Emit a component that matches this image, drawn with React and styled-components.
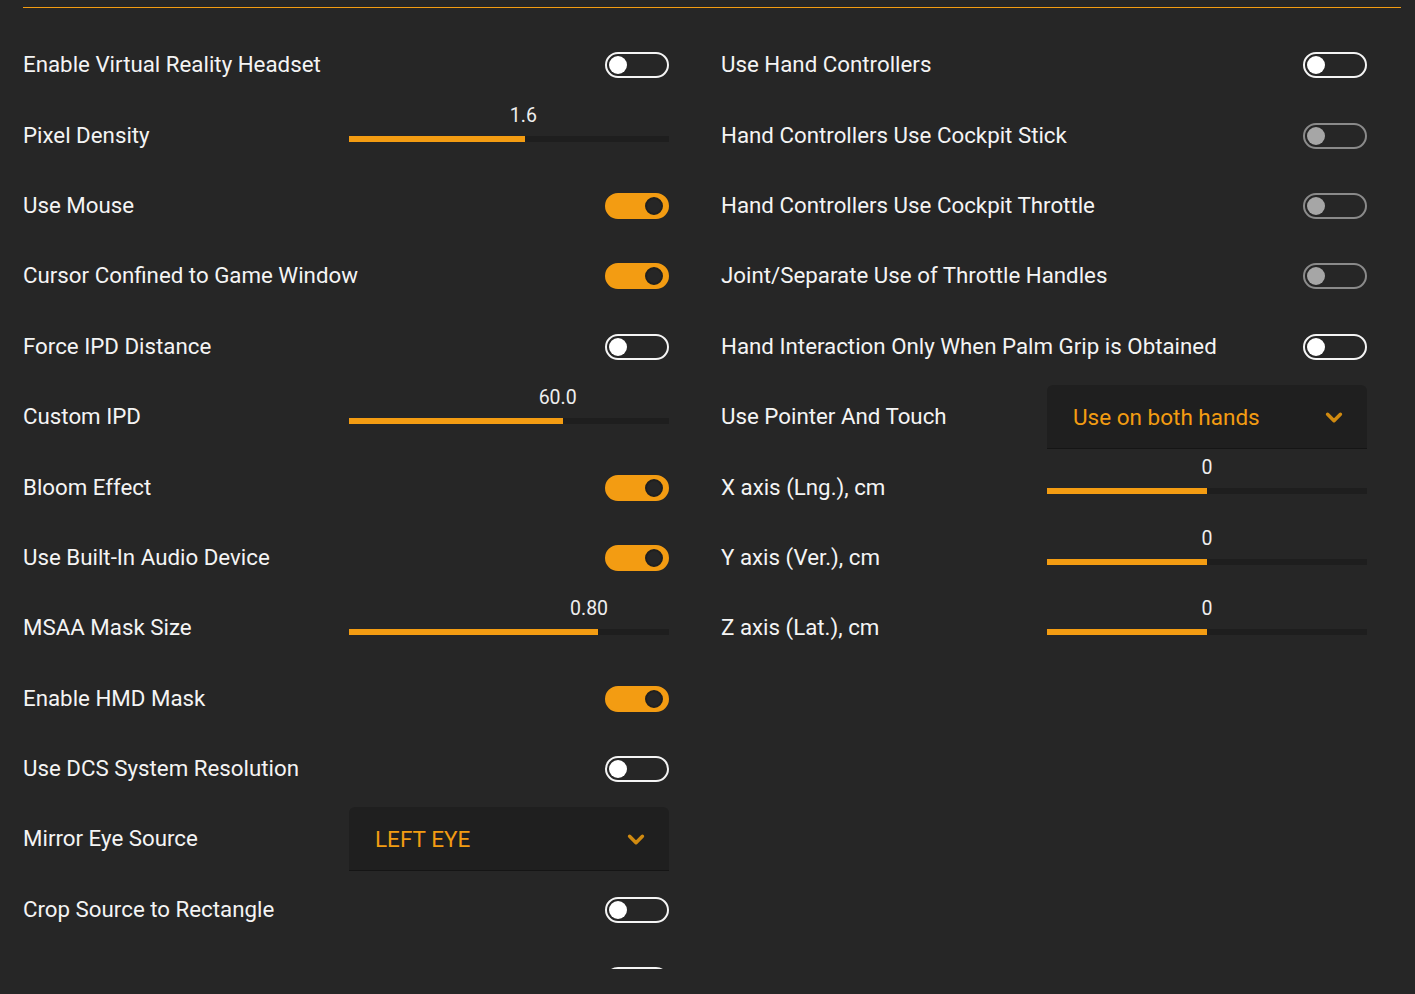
import React from 'react';
import styled, { createGlobalStyle } from 'styled-components';

const GlobalStyle = createGlobalStyle`
    html, body {
        margin: 0;
        padding: 0;
        background: #262626;
        height: 994px;
        overflow: hidden;
    }
    body {
        font-family: Roboto, "Noto Sans", sans-serif;
        color: #f2f2f2;
    }
`;

const leftRows = [
    { label: 'Enable Virtual Reality Headset', type: 'toggle', on: false },
    { label: 'Pixel Density', type: 'slider', value: '1.6', pct: 0.55 },
    { label: 'Use Mouse', type: 'toggle', on: true },
    { label: 'Cursor Confined to Game Window', type: 'toggle', on: true },
    { label: 'Force IPD Distance', type: 'toggle', on: false },
    { label: 'Custom IPD', type: 'slider', value: '60.0', pct: 0.669 },
    { label: 'Bloom Effect', type: 'toggle', on: true },
    { label: 'Use Built-In Audio Device', type: 'toggle', on: true },
    { label: 'MSAA Mask Size', type: 'slider', value: '0.80', pct: 0.778 },
    { label: 'Enable HMD Mask', type: 'toggle', on: true },
    { label: 'Use DCS System Resolution', type: 'toggle', on: false },
    { label: 'Mirror Eye Source', type: 'select', value: 'LEFT EYE' },
    { label: 'Crop Source to Rectangle', type: 'toggle', on: false },
    { label: '', type: 'toggle', on: false },
];

const rightRows = [
    { label: 'Use Hand Controllers', type: 'toggle', on: false },
    { label: 'Hand Controllers Use Cockpit Stick', type: 'toggle', on: false, disabled: true },
    { label: 'Hand Controllers Use Cockpit Throttle', type: 'toggle', on: false, disabled: true },
    { label: 'Joint/Separate Use of Throttle Handles', type: 'toggle', on: false, disabled: true },
    { label: 'Hand Interaction Only When Palm Grip is Obtained', type: 'toggle', on: false },
    { label: 'Use Pointer And Touch', type: 'select', value: 'Use on both hands' },
    { label: 'X axis (Lng.), cm', type: 'slider', value: '0', pct: 0.5 },
    { label: 'Y axis (Ver.), cm', type: 'slider', value: '0', pct: 0.5 },
    { label: 'Z axis (Lat.), cm', type: 'slider', value: '0', pct: 0.5 },
];

const Chevron = () => (
    <svg width="22" height="22" viewBox="0 0 24 24" fill="none">
        <polyline points="5 9 12 16 19 9" stroke="#d08a10" strokeWidth="3.8" strokeLinecap="round" strokeLinejoin="round" />
    </svg>
);

const Control = ({ row }) => {
    if (row.type === 'toggle') {
        return (
            <ToggleCell>
                <Toggle $on={row.on} $disabled={row.disabled}>
                    <Knob $on={row.on} $disabled={row.disabled} />
                </Toggle>
            </ToggleCell>
        );
    }
    if (row.type === 'slider') {
        return (
            <Slider>
                <ValueLine>
                    <Value style={{ left: `calc(16px + ${row.pct} * (100% - 32px))` }}>{row.value}</Value>
                </ValueLine>
                <Track>
                    <Fill style={{ width: `${row.pct * 100}%` }} />
                </Track>
            </Slider>
        );
    }
    return (
        <Select>
            <span>{row.value}</span>
            <Chevron />
        </Select>
    );
};

const Column = ({ rows }) => (
    <ColumnBox>
        {rows.map((row, i) => (
            <Row key={i}>
                <Label>{row.label}</Label>
                <Control row={row} />
            </Row>
        ))}
    </ColumnBox>
);

const App = () => {
    return (
        <Page>
            <GlobalStyle />
            <TopRule />
            <Columns>
                <Column rows={leftRows} />
                <Column rows={rightRows} />
            </Columns>
        </Page>
    );
};

const Page = styled.div`
    padding: 0 14px 0 23px;
    height: 969px;
    overflow: hidden;
`;

const TopRule = styled.div`
    height: 7px;
    border-bottom: 1px solid #f39c12;
    width: 1378px;
`;

const Columns = styled.div`
    display: grid;
    grid-template-columns: 646px 646px;
    column-gap: 52px;
    padding-top: 22px;
`;

const ColumnBox = styled.div`
    display: flex;
    flex-direction: column;
    min-width: 0;
`;

const Row = styled.div`
    height: 70.4px;
    display: grid;
    grid-template-columns: minmax(0, 1fr) 320px;
    align-items: center;
`;

const Label = styled.div`
    font-size: 22.3px;
    line-height: 26px;
    margin-top: -2px;
    color: #f4f4f4;
    white-space: nowrap;
`;

const ToggleCell = styled.div`
    display: flex;
    justify-content: flex-end;
`;

const Toggle = styled.div`
    box-sizing: border-box;
    width: 64px;
    height: 26px;
    border-radius: 13px;
    display: flex;
    align-items: center;
    justify-content: ${p => (p.$on ? 'flex-end' : 'flex-start')};
    padding: 0 4px 0 2px;
    border: 2px solid ${p => (p.$on ? '#f39c12' : p.$disabled ? '#8a8a8a' : '#f4f4f4')};
    background: ${p => (p.$on ? '#f39c12' : 'transparent')};
`;

const Knob = styled.div`
    box-sizing: border-box;
    width: 18px;
    height: 18px;
    border-radius: 50%;
    background: ${p => (p.$on ? '#262626' : p.$disabled ? '#a6a6a6' : '#ffffff')};
    border: ${p => (p.$on ? '2px solid #1f1f1f' : 'none')};
`;

const Slider = styled.div`
    align-self: start;
    padding-top: 6px;
    display: flex;
    flex-direction: column;
    gap: 10px;
`;

const ValueLine = styled.div`
    position: relative;
    height: 20px;
`;

const Value = styled.span`
    position: absolute;
    top: 0;
    transform: translateX(-50%);
    font-size: 19.5px;
    line-height: 20px;
    color: #eeeeee;
`;

const Track = styled.div`
    height: 6px;
    background: #1e1e1e;
`;

const Fill = styled.div`
    height: 100%;
    background: #f39c12;
`;

const Select = styled.div`
    box-sizing: border-box;
    height: 64px;
    display: flex;
    align-items: center;
    justify-content: space-between;
    padding: 0 22px 0 26px;
    background: #1f1f1f;
    border-radius: 6px 6px 0 0;
    border-bottom: 1px solid #151515;
    color: #f39c12;
    font-size: 22.5px;
`;

export default App;
